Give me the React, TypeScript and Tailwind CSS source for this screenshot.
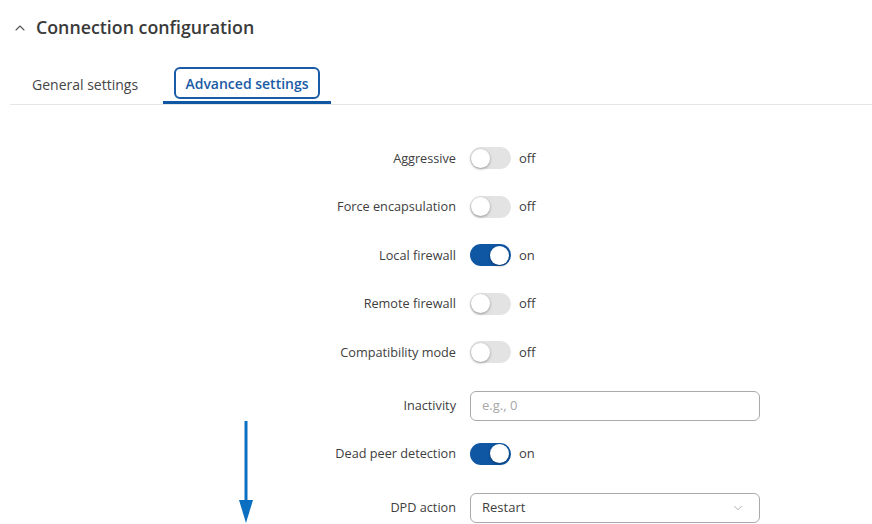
import React from "react";
import { ChevronUp, ChevronDown } from "lucide-react";

type Row =
  | { kind: "toggle"; label: string; on: boolean; h: string }
  | { kind: "input"; label: string; placeholder: string; h: string }
  | { kind: "select"; label: string; value: string; h: string };

const rows: Row[] = [
  { kind: "toggle", label: "Aggressive", on: false, h: "h-[48.5px]" },
  { kind: "toggle", label: "Force encapsulation", on: false, h: "h-[48.5px]" },
  { kind: "toggle", label: "Local firewall", on: true, h: "h-[48.5px]" },
  { kind: "toggle", label: "Remote firewall", on: false, h: "h-[48.5px]" },
  { kind: "toggle", label: "Compatibility mode", on: false, h: "h-[48.5px]" },
  { kind: "input", label: "Inactivity", placeholder: "e.g., 0", h: "h-[59px]" },
  { kind: "toggle", label: "Dead peer detection", on: true, h: "h-[36px]" },
  { kind: "select", label: "DPD action", value: "Restart", h: "h-[72px]" },
];

function Toggle({ on }: { on: boolean }) {
  return (
    <div className="flex items-center gap-2">
      <div
        className={
          on
            ? "w-[41px] h-[22px] rounded-full bg-[#0f56a3] flex items-center justify-end px-[2px]"
            : "w-[41px] h-[22px] rounded-full bg-[#e3e3e3] flex items-center justify-start px-[1px]"
        }
      >
        <div className="w-[19px] h-[19px] rounded-full bg-white shadow-[0_1px_3px_rgba(0,0,0,0.35)]" />
      </div>
      <span className="text-[13px] text-[#404040]">{on ? "on" : "off"}</span>
    </div>
  );
}

export default function App() {
  return (
    <div className="relative w-[872px] h-[524px] overflow-hidden bg-white font-['Open_Sans',sans-serif] text-[#404040]">
      {/* header */}
      <div className="flex items-center gap-[8px] pl-[12px] pt-[7px] h-[48px]">
        <ChevronUp className="w-[16px] h-[16px] text-[#555]" strokeWidth={1.6} />
        <h2 className="text-[17.8px] font-semibold text-[#3a3a3a]">Connection configuration</h2>
      </div>

      {/* tabs */}
      <div className="ml-[10px] mt-[20px] border-b border-[#e6e6e6] flex items-end h-[37px]">
        <div className="w-[153px] h-full flex items-center pl-[22px] pb-[4px] text-[14px] text-[#454545]">
          General settings
        </div>
        <div className="w-[168px] h-full border-b-[3px] border-[#0f56a3] flex items-start justify-center">
          <div className="mt-[-1px] w-[146px] h-[32px] rounded-[6px] border-2 border-[#1a5ba6] flex items-center justify-center text-[14px] font-semibold text-[#1a5ba6]">
            Advanced settings
          </div>
        </div>
      </div>

      {/* form */}
      <div className="pt-[29px]">
        {rows.map((r) => (
          <div key={r.label} className={`flex items-center ${r.h}`}>
            <div className="w-[456px] text-right text-[12.7px] text-[#404040]">{r.label}</div>
            <div className="ml-[14px]">
              {r.kind === "toggle" && <Toggle on={r.on} />}
              {r.kind === "input" && (
                <div className="w-[290px] h-[30px] rounded-[6px] border border-[#a9a9ae] flex items-center px-[11px] text-[13px] text-[#a8a8a8]">
                  {r.placeholder}
                </div>
              )}
              {r.kind === "select" && (
                <div className="w-[290px] h-[30px] rounded-[6px] border border-[#a9a9ae] flex items-center justify-between pl-[11px] pr-[14px] text-[13px] text-[#404040]">
                  <span>{r.value}</span>
                  <ChevronDown className="w-[14px] h-[14px] text-[#999]" strokeWidth={1.3} />
                </div>
              )}
            </div>
          </div>
        ))}
      </div>

      {/* annotation arrow */}
      <svg className="absolute left-[236px] top-[420px]" width="20" height="104" viewBox="0 0 20 104">
        <line x1="10" y1="1" x2="10" y2="84" stroke="#0a6fc0" strokeWidth="3" />
        <polygon points="3,80 17,80 10,103" fill="#0a6fc0" />
      </svg>
    </div>
  );
}
